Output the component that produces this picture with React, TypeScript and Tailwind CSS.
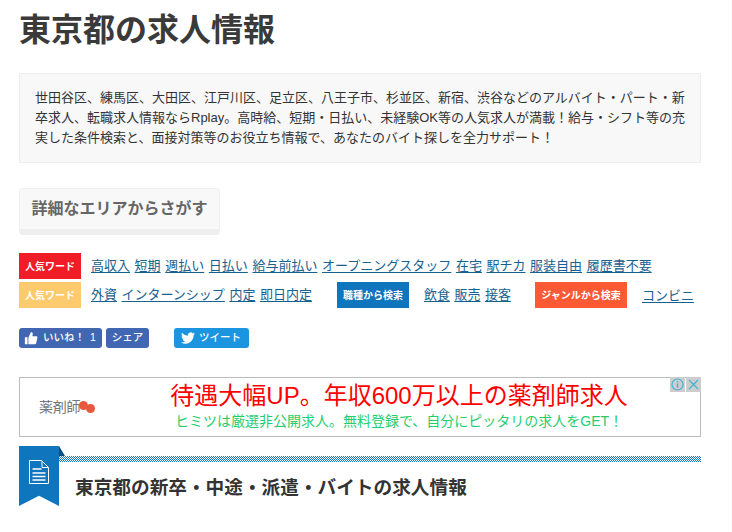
import React from 'react';

const FONT = "font-['Liberation_Sans','Noto_Sans_CJK_JP',sans-serif]";

const Tag = ({ color, width, children }: { color: string; width: string; children: React.ReactNode }) => (
  <span className={`${color} ${width} h-[26px] shrink-0 flex items-center justify-center text-white text-[10px] font-bold`}>
    {children}
  </span>
);

const Word = ({ children }: { children: React.ReactNode }) => (
  <a className="text-[13px] leading-[16px] text-[#17618f] underline underline-offset-2 whitespace-nowrap">{children}</a>
);

const row1 = ['高収入', '短期', '週払い', '日払い', '給与前払い', 'オープニングスタッフ', '在宅', '駅チカ', '服装自由', '履歴書不要'];

export default function App() {
  return (
    <div className={`${FONT} w-[732px] h-[532px] overflow-hidden bg-white pl-[19px] pr-[30px] border-r border-[#f8f8f8] text-[#333]`}>
      <h1 className="text-[32px] leading-[40px] font-bold text-[#3a3a3a] pt-[10px] h-[73px]">東京都の求人情報</h1>

      <div className="h-[90px] bg-[#f8f8f8] border border-[#eeeeee] pl-[15px] pr-[10px] pt-[14px] text-[13px] leading-[20px] text-[#333]">
        世田谷区、練馬区、大田区、江戸川区、足立区、八王子市、杉並区、新宿、渋谷などのアルバイト・パート・新卒求人、転職求人情報ならRplay。高時給、短期・日払い、未経験OK等の人気求人が満載！給与・シフト等の充実した条件検索と、面接対策等のお役立ち情報で、あなたのバイト探しを全力サポート！
      </div>

      <div className="mt-[25px] w-[201px] h-[47px] bg-[#f8f8f8] border border-[#f0f0f0] border-b-[6px] border-b-[#eeeeee] rounded-[4px] flex items-center justify-center text-[16px] font-bold text-[#666]">
        詳細なエリアからさがす
      </div>

      <div className="mt-[18px] flex items-center gap-[10px]">
        <Tag color="bg-[#f01c26]" width="w-[62px]">人気ワード</Tag>
        <div className="flex gap-[4.6px]">
          {row1.map(w => <Word key={w}>{w}</Word>)}
        </div>
      </div>

      <div className="mt-[3px] flex items-center">
        <Tag color="bg-[#fdcb6e]" width="w-[62px]">人気ワード</Tag>
        <div className="flex gap-[4.5px] ml-[10px]">
          {['外資', 'インターンシップ', '内定', '即日内定'].map(w => <Word key={w}>{w}</Word>)}
        </div>
        <div className="ml-[25px]"><Tag color="bg-[#0f75bc]" width="w-[72px]">職種から検索</Tag></div>
        <div className="flex gap-[4.5px] ml-[15px]">
          {['飲食', '販売', '接客'].map(w => <Word key={w}>{w}</Word>)}
        </div>
        <div className="ml-[24px]"><Tag color="bg-[#fb5a35]" width="w-[92px]">ジャンルから検索</Tag></div>
        <div className="ml-[15px]"><Word>コンビニ</Word></div>
      </div>

      <div className="mt-[20px] flex items-center h-[20px] text-white text-[10.5px] font-medium">
        <span className="w-[83px] h-[20px] rounded-[3px] bg-[#4267b2] flex items-center pl-[5px] gap-[5px]">
          <svg viewBox="0 0 16 16" className="w-[14px] h-[14px] fill-white">
            <path d="M1 7h3v8H1zM5 7.500 8 1.200c1.200 0 2 .900 2 2.100L9.600 6H14c.900 0 1.500.800 1.300 1.600l-1.300 6.200c-.200.700-.700 1.200-1.500 1.200H5z" />
          </svg>
          <span>いいね！</span>
          <span>1</span>
        </span>
        <span className="ml-[4px] w-[43px] h-[20px] rounded-[3px] bg-[#4267b2] flex items-center justify-center">シェア</span>
        <span className="ml-[25px] w-[75px] h-[20px] rounded-[3px] bg-[#1b95e0] flex items-center pl-[7px] gap-[4px]">
          <svg viewBox="0 0 24 24" className="w-[14px] h-[14px] fill-white">
            <path d="M23.950 4.570a10 10 0 0 1-2.820.770 4.960 4.960 0 0 0 2.160-2.720c-.950.550-2 .950-3.130 1.190a4.920 4.920 0 0 0-8.380 4.480A14 14 0 0 1 1.640 3.160a4.820 4.820 0 0 0-.670 2.480c0 1.710.870 3.210 2.190 4.100a4.900 4.900 0 0 1-2.230-.620v.060a4.920 4.920 0 0 0 3.950 4.830 5 5 0 0 1-2.210.080 4.940 4.940 0 0 0 4.600 3.420A9.870 9.870 0 0 1 0 19.540a14 14 0 0 0 7.560 2.210c9.050 0 14-7.500 14-13.980 0-.210 0-.420-.020-.630a9.940 9.940 0 0 0 2.410-2.570z" />
          </svg>
          ツイート
        </span>
      </div>

      <div className="relative mt-[29px] h-[60px] border border-[#bbbbbb] flex items-center">
        <div className="w-[122px] shrink-0 pl-[19px] flex items-center">
          <span className="text-[14px] text-[#777] tracking-[-0.3px]">薬剤師</span>
          <span className="w-[9px] h-[9px] -ml-[1px] -mt-[3px] rounded-full bg-[#e8583c]" />
          <span className="w-[9px] h-[9px] -ml-[2px] mt-[3px] rounded-full bg-[#e8583c]" />
        </div>
        <div className="flex-1 pr-[44px] -mt-[2px] flex flex-col items-center">
          <div className="text-[24px] leading-[30px] text-[#ff0000]">待遇大幅UP。年収600万以上の薬剤師求人</div>
          <div className="text-[14px] leading-[20px] text-[#1fce6d]">ヒミツは厳選非公開求人。無料登録で、自分にピッタリの求人をGET！</div>
        </div>
        <div className="absolute -top-px -right-px flex gap-px">
          <span className="w-[15px] h-[15px] bg-[#cdcdcd] flex items-center justify-center">
            <svg viewBox="0 0 15 15" className="w-[15px] h-[15px] fill-none stroke-[#3bb6d6]">
              <circle cx="7.500" cy="7.500" r="5.500" strokeWidth="1.200" />
              <path d="M7.500 6.500v4M7.500 4.200v1.200" strokeWidth="1.400" />
            </svg>
          </span>
          <span className="w-[15px] h-[15px] bg-[#cdcdcd] flex items-center justify-center">
            <svg viewBox="0 0 15 15" className="w-[15px] h-[15px] fill-none stroke-[#3bb6d6]">
              <path d="M3 3l9 9M12 3l-9 9" strokeWidth="1.200" />
            </svg>
          </span>
        </div>
      </div>

      <div className="relative mt-[9px] flex">
        <div className="w-[40px] h-[60px] shrink-0 flex justify-center pt-[14px] bg-[#0f75bc] [clip-path:polygon(0_0,100%_0,100%_100%,50%_83%,0_100%)]">
          <svg viewBox="0 0 20 24" className="w-[20px] h-[24px] fill-none stroke-white">
            <path d="M.500.500h12l7 7v16H.500z" />
            <path d="M13 1v6.500h6.500" />
            <path d="M3.500 9h9M3.500 13h13M3.500 16.500h13M3.500 20h13" strokeWidth="1.300" />
          </svg>
        </div>
        <div className="absolute left-[40px] top-0 w-[6px] h-[10px] bg-[#0a4f85] [clip-path:polygon(0_0,100%_100%,0_100%)]" />
        <div className="flex-1 pt-[10px]">
          {/* 1px checker band */}
          <svg className="block w-full h-[6px]" shapeRendering="crispEdges">
            <defs>
              <pattern id="checker" width="2" height="2" patternUnits="userSpaceOnUse">
                <rect width="1" height="1" fill="#0f75bc" />
                <rect x="1" y="1" width="1" height="1" fill="#0f75bc" />
              </pattern>
            </defs>
            <rect width="100%" height="6" fill="url(#checker)" />
          </svg>
          <h2 className="pl-[16px] mt-[13px] text-[18.67px] leading-[26px] font-bold text-[#333]">東京都の新卒・中途・派遣・バイトの求人情報</h2>
        </div>
      </div>
    </div>
  );
}
